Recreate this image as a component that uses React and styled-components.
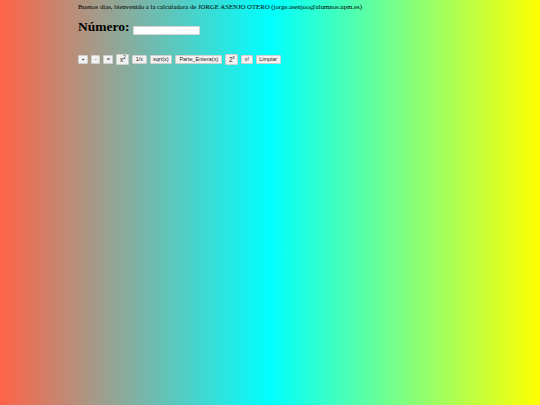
import React from 'react'
import styled, { createGlobalStyle } from 'styled-components'

const Global = createGlobalStyle`
  html, body { margin: 0; padding: 0; }
  body { width: 540px; height: 405px; overflow: hidden; }
`

const Page = styled.div`
  box-sizing: border-box;
  width: 540px;
  height: 405px;
  padding: 3px 0 0 78px;
  background: linear-gradient(to right, tomato, cyan, yellow);
  font-family: "Liberation Serif", "Times New Roman", serif;
  color: #000;
`

const Greeting = styled.p`
  margin: 0;
  font-size: 6.75px;
  line-height: 8px;
`

const NumberRow = styled.div`
  display: flex;
  align-items: flex-start;
  gap: 3px;
  margin-top: 8px;
`

const Label = styled.label`
  font-size: 13.5px;
  font-weight: bold;
  line-height: 16px;
`

const NumberInput = styled.input`
  box-sizing: border-box;
  width: 67px;
  height: 9px;
  margin-top: 7px;
  padding: 0;
  background: #fff;
  border: 1px solid #d4d4d4;
  border-radius: 1px;
`

const Toolbar = styled.div`
  display: flex;
  align-items: center;
  gap: 3px;
  margin-top: 19px;
`

const Key = styled.button`
  box-sizing: border-box;
  height: ${p => (p.$tall ? '11px' : '9px')};
  padding: 0 ${p => (p.$wide ? '3.25px' : '2.5px')};
  min-width: 9px;
  background: #f2f2f2;
  border: 1px solid #cfcfcf;
  border-radius: 1px;
  font-family: "Liberation Sans", Arial, sans-serif;
  font-size: ${p => (p.$tall ? '6.5px' : '5.5px')};
  line-height: 7px;
  color: #1c1c1c;
  sup { font-size: 4.5px; line-height: 0; }
`

export default function App() {
  return (
    <Page>
      <Global />
      <Greeting>Buenos días, bienvenido a la calculadora de JORGE ASENJO OTERO (jorge.asenjoo@alumnos.upm.es)</Greeting>
      <NumberRow>
        <Label>Número:</Label>
        <NumberInput />
      </NumberRow>
      <Toolbar>
        <Key>+</Key>
        <Key>-</Key>
        <Key>=</Key>
        <Key $tall>x<sup>2</sup></Key>
        <Key>1/x</Key>
        <Key>sqrt(x)</Key>
        <Key $wide>Parte_Entera(x)</Key>
        <Key $tall>2<sup>x</sup></Key>
        <Key>x!</Key>
        <Key>Limpiar</Key>
      </Toolbar>
    </Page>
  )
}
